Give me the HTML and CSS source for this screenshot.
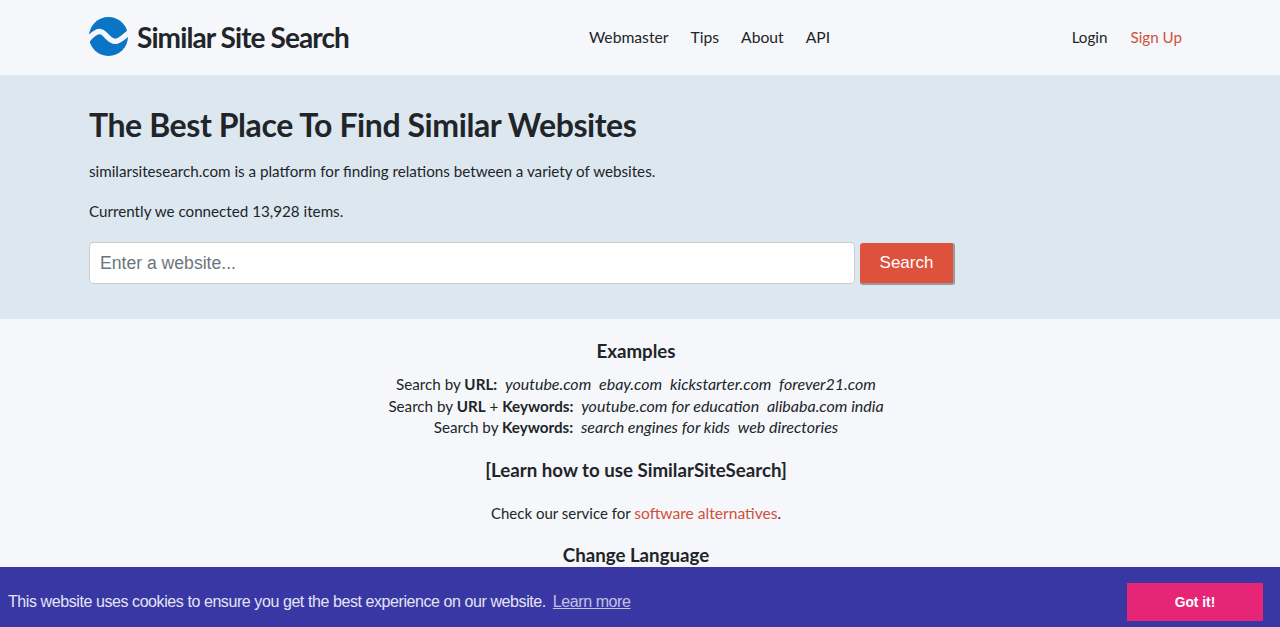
FILE: index.html
```html
<!DOCTYPE html>
<html lang="en">
<head>
<meta charset="utf-8">
<title>Similar Site Search</title>
<link rel="stylesheet" href="styles.css">
</head>
<body>
<header class="topbar">
  <div class="wrap topbar-row">
    <a class="brand" href="#">
      <svg class="logo" viewBox="0 0 40 40" width="39" height="39" aria-hidden="true">
        <circle cx="20" cy="20" r="20" fill="#0a75c4"/>
        <path d="M-2 24 C4 17 8 14 12 15 C17 16 20 25 27 25 C32 25 36 20 42 15" fill="none" stroke="#f5f7fa" stroke-width="5.5"/>
      </svg>
      <span class="brand-name">Similar Site Search</span>
    </a>
    <nav class="nav-main">
      <a href="#">Webmaster</a><a href="#">Tips</a><a href="#">About</a><a href="#">API</a>
    </nav>
    <nav class="nav-user">
      <a href="#">Login</a><a class="accent" href="#">Sign Up</a>
    </nav>
  </div>
</header>
<section class="hero">
  <div class="wrap">
    <h1>The Best Place To Find Similar Websites</h1>
    <p class="lead">similarsitesearch.com is a platform for finding relations between a variety of websites.</p>
    <p class="lead count">Currently we connected 13,928 items.</p>
    <form class="search">
      <input type="text" placeholder="Enter a website...">
      <button type="button">Search</button>
    </form>
  </div>
</section>
<main class="examples">
  <h2>Examples</h2>
  <p class="line">Search by <b>URL:</b>&nbsp; <i>youtube.com</i>&nbsp; <i>ebay.com</i>&nbsp; <i>kickstarter.com</i>&nbsp; <i>forever21.com</i></p>
  <p class="line">Search by <b>URL</b> + <b>Keywords:</b>&nbsp; <i>youtube.com for education</i>&nbsp; <i>alibaba.com india</i></p>
  <p class="line">Search by <b>Keywords:</b>&nbsp; <i>search engines for kids</i>&nbsp; <i>web directories</i></p>
  <h3>[Learn how to use SimilarSiteSearch]</h3>
  <p class="check">Check our service for <a class="accent" href="#">software alternatives</a>.</p>
  <h3 class="lang">Change Language</h3>
</main>
<aside class="cookie">
  <span class="cookie-msg">This website uses cookies to ensure you get the best experience on our website. <a href="#">Learn more</a></span>
  <a class="cookie-btn" href="#">Got it!</a>
</aside>
</body>
</html>
```
FILE: styles.css
```css
* { box-sizing: border-box; }
html, body { margin: 0; height: 100%; }
body { height: 627px; overflow: hidden; background: #f5f7fa; color: #212529; font-family: Lato, sans-serif; font-size: 16px; position: relative; }
a { color: inherit; text-decoration: none; }
.accent { color: #d0503c; }
.wrap { width: 1110px; margin: 0 auto; padding: 0 5px 0 4px; }
.topbar { height: 75px; }
.topbar-row { display: flex; align-items: center; height: 73px; }
.brand { display: flex; align-items: center; gap: 9px; width: 500px; }
.brand-name { font-size: 28px; font-weight: 700; letter-spacing: -0.9px; }
.nav-main { display: flex; gap: 22px; flex: 1; font-size: 15.7px; }
.nav-user { display: flex; gap: 23px; margin-right: 8px; font-size: 15.2px; }
.hero { background: #dde7f0; height: 244px; padding-top: 28px; }
h1 { margin: 0 0 12px; font-size: 32px; line-height: 44px; font-weight: 700; letter-spacing: -0.42px; }
.lead { margin: 0 0 16px; font-size: 15.2px; line-height: 24px; }
.count { margin-bottom: 19px; }
.search { display: flex; align-items: flex-start; gap: 5px; width: 866px; }
.search input { width: 766px; height: 42px; padding: 0 10px; border: 1px solid #ccc; border-radius: 4px; background: #fff; font: 17.6px "Liberation Sans", sans-serif; }
.search input::placeholder { color: #6c757d; }
.search button { width: 95px; height: 42px; margin-top: 1px; border: 0; border-right: 2px solid #999; border-bottom: 2px solid #999; border-radius: 3px; background: #de513c; color: #fff; font: 17px "Liberation Sans", sans-serif; }
.examples { text-align: center; padding: 20px 8px 0 0; }
h2, h3 { margin: 0; font-size: 18.7px; font-weight: 700; line-height: 24px; }
h2 { margin-bottom: 11px; }
.line { margin: 0; line-height: 21.5px; font-size: 15.2px; }
.line i { font-size: 16px; line-height: 1; }
h3 { margin-top: 19px; }
.check { margin: 19px 0 0; line-height: 24px; font-size: 15px; }
.check .accent { font-size: 15.6px; line-height: 1; }
.lang { margin-top: 18px; }
.cookie { position: absolute; left: 0; right: 0; bottom: 0; height: 60px; background: #3937a3; color: #e4e4f4; display: flex; align-items: center; justify-content: space-between; padding: 10px 17px 0 8px; font-family: "Liberation Sans", sans-serif; font-size: 16px; }
.cookie-msg { letter-spacing: -0.42px; }
.cookie-msg a { margin-left: 3px; text-decoration: underline; opacity: .8; }
.cookie-btn { width: 136px; height: 38px; display: flex; align-items: center; justify-content: center; background: #e62576; color: #fff; font-size: 13.8px; font-weight: 700; }
```
